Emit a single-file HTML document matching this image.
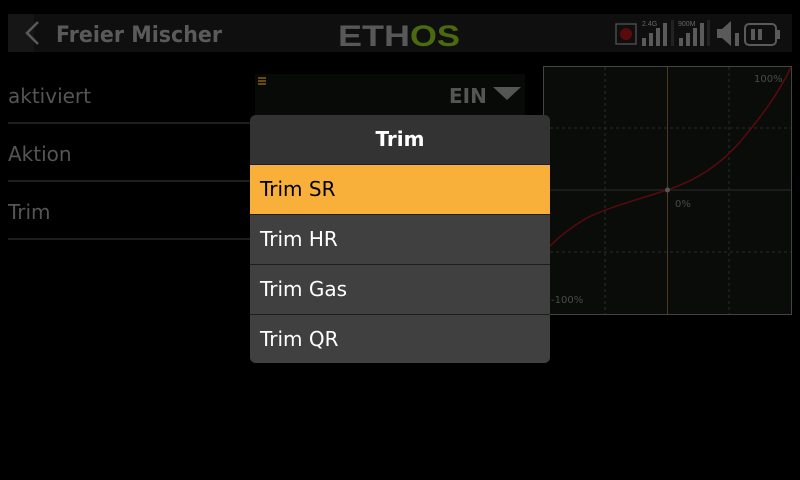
<!DOCTYPE html>
<html><head><meta charset="utf-8"><style>
*{margin:0;padding:0;box-sizing:border-box}
body{width:800px;height:480px;background:#000;position:relative;overflow:hidden;font-family:"DejaVu Sans","Liberation Sans",sans-serif}
.abs{position:absolute}
.lbl{position:absolute;left:8px;font-size:20px;color:#555}
.line{position:absolute;left:8px;width:242px;height:2px;background:#1e1e1e}
.dd{position:absolute;left:250px;top:115px;width:300px;height:248px;border-radius:6px;overflow:hidden;background:#3f3f3f}
.it{position:absolute;left:0;width:300px;height:50px;font-size:20px;color:#fff;padding-left:10px;line-height:49px;background:#404040;border-top:1px solid #1e1e1e}
</style></head><body>
<div class="abs" style="left:8px;top:14px;width:784px;height:38px;background:#0f0f0f"></div>
<div class="abs" style="left:8px;top:14px;width:26px;height:38px;background:#161616"></div>
<svg class="abs" style="left:0;top:0" width="800" height="60">
<polyline points="38,22 27,33 38,44" fill="none" stroke="#5a5a5a" stroke-width="2.5"/>
<text x="56" y="42" font-family="DejaVu Sans" font-weight="bold" font-size="22" fill="#5a5a5a" textLength="166" lengthAdjust="spacingAndGlyphs">Freier Mischer</text>
<text x="338" y="46" font-family="Liberation Sans" font-weight="bold" font-size="30" fill="#585858" textLength="72" lengthAdjust="spacingAndGlyphs">ETH</text>
<text x="410" y="46" font-family="Liberation Sans" font-weight="bold" font-size="30" fill="#4b6a10" textLength="50" lengthAdjust="spacingAndGlyphs">OS</text>
<rect x="616" y="24" width="20" height="20" fill="none" stroke="#4a4a4a" stroke-width="1.5"/>
<circle cx="626" cy="34" r="6" fill="#5a0a0a"/>
<text x="642" y="26" font-size="7" fill="#666" font-family="Liberation Sans">2.4G</text>
<g fill="#5a5a5a"><rect x="642" y="38" width="4" height="8"/><rect x="649" y="33" width="4" height="13"/><rect x="656" y="28" width="4" height="18"/><rect x="663" y="23" width="4" height="23"/></g>
<rect x="671" y="20" width="3" height="26" fill="#222"/>
<text x="678" y="26" font-size="7" fill="#666" font-family="Liberation Sans">900M</text>
<g fill="#5a5a5a"><rect x="679" y="38" width="4" height="8"/><rect x="686" y="33" width="4" height="13"/><rect x="693" y="28" width="4" height="18"/><rect x="700" y="23" width="4" height="23"/></g>
<rect x="707" y="20" width="3" height="26" fill="#222"/>
<polygon points="717,29 722,29 731,21 731,46 722,38 717,38" fill="#5a5a5a"/>
<rect x="735" y="33" width="4" height="13" fill="#5a5a5a"/>
<rect x="745" y="24" width="31" height="21" rx="4" fill="none" stroke="#5a5a5a" stroke-width="2"/>
<rect x="776" y="30" width="4" height="9" fill="#5a5a5a"/>
<rect x="751" y="29" width="4" height="11" fill="#5a5a5a"/><rect x="758" y="29" width="4" height="11" fill="#5a5a5a"/>
</svg>
<div class="lbl" style="top:84px">aktiviert</div>
<div class="line" style="top:122px"></div>
<div class="lbl" style="top:142px">Aktion</div>
<div class="line" style="top:180px"></div>
<div class="lbl" style="top:200px">Trim</div>
<div class="line" style="top:238px"></div>
<div class="abs" style="left:255px;top:74px;width:270px;height:42px;background:#080a08"></div>
<div class="abs" style="left:258px;top:77px;width:8px;height:1.5px;background:#6a4a10;box-shadow:0 3px 0 #6a4a10,0 6px 0 #6a4a10"></div>
<div class="abs" style="left:449px;top:84px;font-size:20px;font-weight:bold;color:#555">EIN</div>
<svg class="abs" style="left:492px;top:86px" width="30" height="16"><polygon points="1,1 29,1 15,14" fill="#555"/></svg>
<svg class="abs" style="left:0;top:0" width="800" height="480">
<rect x="543.5" y="66.5" width="248" height="248" fill="#0a0c0a" stroke="#444" stroke-width="1"/>
<g stroke="#2a2a2a" stroke-dasharray="3,3"><line x1="605" y1="67" x2="605" y2="314"/><line x1="729" y1="67" x2="729" y2="314"/><line x1="544" y1="128" x2="791" y2="128"/><line x1="544" y1="252" x2="791" y2="252"/></g>
<line x1="544" y1="190" x2="791" y2="190" stroke="#2a2a2a"/>
<line x1="667.5" y1="67" x2="667.5" y2="314" stroke="#4a3a20"/>
<path d="M550,246 C560,236 570,228 585,219 C605,208 640,199 667,190 C695,181 720,165 740,142 C760,118 778,95 791,67" fill="none" stroke="#5a0a0a" stroke-width="1.5"/>
<circle cx="667.5" cy="190" r="2.5" fill="#555"/>
<text x="754" y="82" font-size="10" fill="#4a4a4a" font-family="DejaVu Sans">100%</text>
<text x="675" y="207" font-size="10" fill="#4a4a4a" font-family="DejaVu Sans">0%</text>
<text x="551" y="303" font-size="10" fill="#4a4a4a" font-family="DejaVu Sans">-100%</text>
</svg>
<div class="dd">
<div class="abs" style="left:0;top:0;width:300px;height:50px;background:#333;color:#fff;font-weight:bold;font-size:20px;text-align:center;line-height:48px">Trim</div>
<div class="it" style="top:49px;background:#f8b03a;color:#000">Trim SR</div>
<div class="it" style="top:99px">Trim HR</div>
<div class="it" style="top:149px">Trim Gas</div>
<div class="it" style="top:199px;height:49px">Trim QR</div>
</div>
</body></html>
